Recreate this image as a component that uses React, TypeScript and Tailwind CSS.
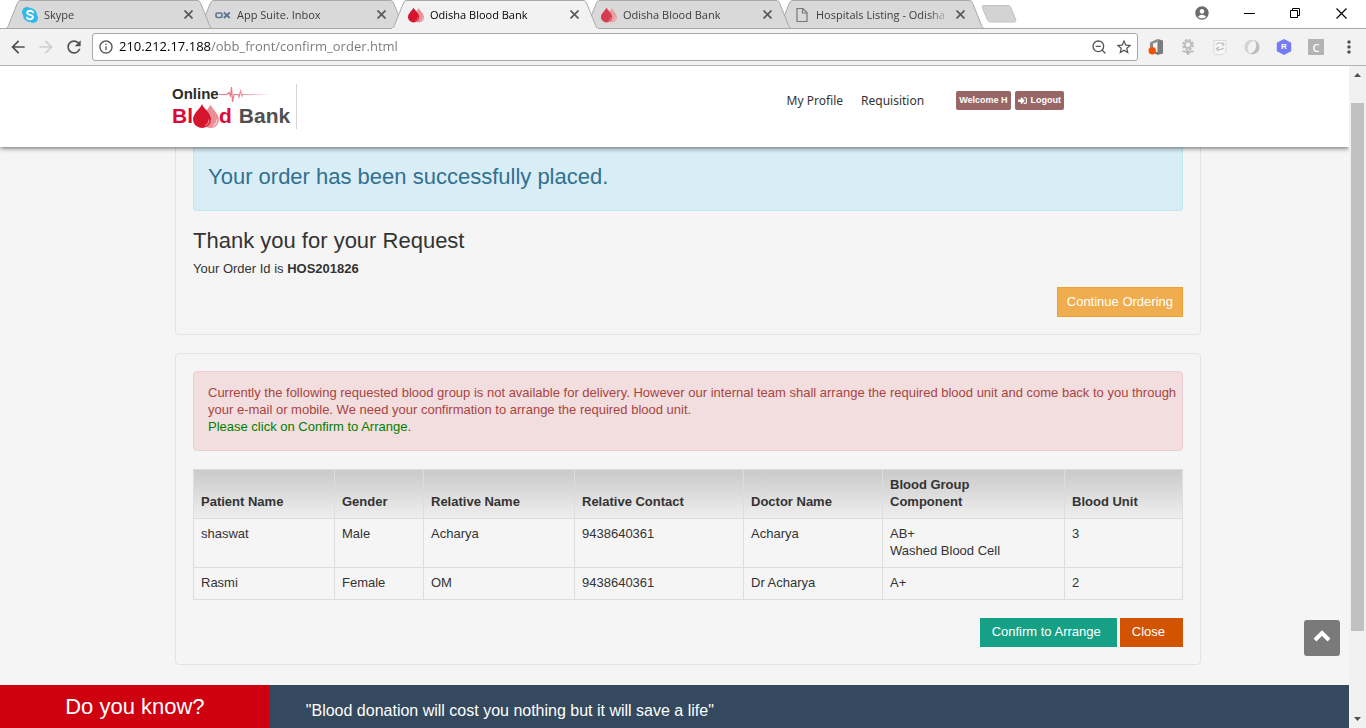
import React from "react";
import { ZoomOut } from "lucide-react";
import { FaSignInAlt } from "react-icons/fa";
import { MdAccountCircle, MdRefresh, MdInfoOutline, MdArrowBack, MdArrowForward, MdStarBorder, MdMoreVert } from "react-icons/md";

function Drops({ className }: { className: string }) {
  return (
    <svg viewBox="0 0 26 24" className={className} aria-hidden="true">
      <path d="M17.5 0.5C18.500 4 26 9.500 26 16A8.500 8 0 0 1 9 16C9 9.500 16.500 4 17.500 0.500Z" fill="#ea8f96" />
      <path d="M24 15.500C24 18.500 22.500 20.500 20 21.700" stroke="#f8d5d8" strokeWidth="1.200" fill="none" />
      <path d="M9 0C10 4 18 9 18 15.500A9 8.500 0 0 1 0 15.500C0 9 8 4 9 0Z" fill="#d5152f" />
      <path d="M16 15.500C16 18.500 14.500 20.500 12 21.700" stroke="#ec7f8c" strokeWidth="1.200" fill="none" />
    </svg>
  );
}

function SkypeIcon() {
  return (
    <svg viewBox="0 0 16 16" className="size-4" aria-hidden="true">
      <circle cx="5" cy="5" r="5" fill="#31b8ee" />
      <circle cx="11" cy="11" r="5" fill="#31b8ee" />
      <circle cx="8" cy="8" r="7" fill="#31b8ee" />
      <path
        d="M11 5.300C10.400 4.200 9.300 3.800 8 3.800C6.400 3.800 5.200 4.500 5.200 5.800C5.200 8.600 10.900 7.300 10.900 10C10.900 11.500 9.500 12.200 8 12.200C6.600 12.200 5.500 11.700 4.900 10.500"
        fill="none"
        stroke="#fff"
        strokeWidth="1.900"
        strokeLinecap="round"
      />
    </svg>
  );
}

function OxIcon() {
  return (
    <svg viewBox="0 0 16 16" className="size-4" aria-hidden="true">
      <rect x="1" y="6" width="6" height="4.500" rx="1.500" fill="none" stroke="#5c7594" strokeWidth="1.700" />
      <path d="M8.800 5.500L14.800 11M14.800 5.500L8.800 11" stroke="#5c7594" strokeWidth="1.800" />
    </svg>
  );
}

function PageIcon() {
  return (
    <svg viewBox="0 0 16 16" className="size-4" aria-hidden="true">
      <path d="M3 1.500H9L13 5.500V14.500H3ZM8.500 1.500V6H13" fill="none" stroke="#777" strokeWidth="1.200" />
    </svg>
  );
}

type TabInfo = { title: string; icon: React.ReactNode; level: string; active?: boolean };

const tabs: TabInfo[] = [
  { title: "Skype", icon: <SkypeIcon />, level: "z-10" },
  { title: "App Suite. Inbox", icon: <OxIcon />, level: "z-0" },
  { title: "Odisha Blood Bank", icon: <Drops className="size-4" />, level: "z-20", active: true },
  { title: "Odisha Blood Bank", icon: <Drops className="size-4 opacity-80" />, level: "z-10" },
  { title: "Hospitals Listing - Odisha", icon: <PageIcon />, level: "z-0" },
];

function Tab({ tab }: { tab: TabInfo }) {
  return (
    <div className={`relative -mr-[13px] flex h-[29px] w-[206px] items-center pr-4 pl-4 ${tab.level}`}>
      <svg viewBox="0 0 206 29" className="absolute inset-0 h-full w-full" preserveAspectRatio="none" aria-hidden="true">
        <path
          d="M0 28.500C2 28 2 26 3 24L11 4C12.500 1 13 0.500 15 0.500H191C193 0.500 193.500 1 195 4L203 24C204 26 204 28 206 28.500"
          fill={tab.active ? "#f2f2f2" : "#d9d9d9"}
          stroke="#a9a9a9"
        />
        <path d="M0 28.500H206" stroke={tab.active ? "#f2f2f2" : "#a9a9a9"} />
      </svg>
      <span className="relative flex w-[22px] shrink-0">{tab.icon}</span>
      <span
        className={`relative flex-1 whitespace-nowrap [mask-image:linear-gradient(to_right,#000_112px,transparent_134px)] ${tab.active ? "text-black" : "text-[#3c3c3c]"}`}
      >
        {tab.title}
      </span>
      <button type="button" aria-label={`Close ${tab.title}`} className="relative flex size-4 items-center justify-center">
        <svg viewBox="0 0 9 9" className="size-[9px]" aria-hidden="true">
          <path d="M0.500 0.500L8.500 8.500M8.500 0.500L0.500 8.500" stroke="#5a5a5a" strokeWidth="1.700" />
        </svg>
      </button>
    </div>
  );
}

function TabStrip() {
  return (
    <div className="flex h-[29px] items-center border-b border-[#a9a9a9] bg-white pl-[6px] font-['Open_Sans',sans-serif] text-[11px] leading-4">
      <div className="flex h-[28px] items-start">
        {tabs.map((tab, i) => (
          <Tab key={i} tab={tab} />
        ))}
      </div>
      <button type="button" aria-label="New tab" className="ml-[10px] flex">
        <svg viewBox="0 0 36 18" className="h-[18px] w-9" aria-hidden="true">
          <path d="M3 0.500H27C28.500 0.500 29 1 30 3L34.500 14C35 16 35 17 33 17H10C8 17 7 16 6.500 15L1.500 3C1 1.500 1 0.500 3 0.500Z" fill="#d3d3d3" stroke="#c0c0c0" />
        </svg>
      </button>
      <div className="ml-auto flex items-center pr-[2px] pb-[2px] text-black">
        <button type="button" aria-label="Profile" className="flex h-[26px] w-12 items-center justify-center text-[#6b6b6b]">
          <MdAccountCircle className="size-4" />
        </button>
        <button type="button" aria-label="Minimize" className="flex h-[26px] w-[46px] items-center justify-center">
          <svg viewBox="0 0 11 11" className="size-[11px]"><path d="M0 5.500H11" stroke="currentColor" /></svg>
        </button>
        <button type="button" aria-label="Restore" className="flex h-[26px] w-[46px] items-center justify-center">
          <svg viewBox="0 0 10 10" className="size-[10px]" fill="none" stroke="currentColor">
            <path d="M0.500 2.500H7.500V9.500H0.500ZM2.500 2.500V0.500H9.500V7.500H7.500" />
          </svg>
        </button>
        <button type="button" aria-label="Close window" className="flex h-[26px] w-[46px] items-center justify-center">
          <svg viewBox="0 0 11 11" className="size-[11px]"><path d="M0.500 0.500L10.500 10.500M10.500 0.500L0.500 10.500" stroke="currentColor" strokeWidth="1.200" /></svg>
        </button>
      </div>
    </div>
  );
}

function Extensions() {
  const cell = "flex w-8 items-center justify-center";
  return (
    <div className="flex items-center">
      <button type="button" aria-label="Office" className={cell}>
        <svg viewBox="0 0 16 16" className="size-4">
          <path d="M2 3.500L9.500 0V3L5 4.500V10L2 11Z" fill="#8a8a8a" />
          <path d="M9.500 0L15 1.500V14.500L9.500 16Z" fill="#7c7c7c" />
          <path d="M3 12.500L10 13V16Z" fill="#757575" />
          <circle cx="4.200" cy="11.800" r="3.700" fill="#f25200" />
        </svg>
      </button>
      <button type="button" aria-label="Flower" className={cell}>
        <svg viewBox="0 0 16 16" className="size-4" fill="none" stroke="#b9b9b9">
          <circle cx="8" cy="5.800" r="4.700" strokeWidth="2.200" strokeDasharray="2.300 1.390" />
          <circle cx="8" cy="5.800" r="3.200" strokeWidth="1.500" />
          <path d="M8 11V14.500M2.500 12.500C5 12 7 13 8 15C9 13 11 12 13.500 12.500" strokeWidth="1.800" />
        </svg>
      </button>
      <button type="button" aria-label="Page tool" className={cell}>
        <svg viewBox="0 0 16 16" className="size-4">
          <path d="M2 1.500H14V12L11 15.500H2Z" fill="#f8f8f8" stroke="#dadada" />
          <path d="M4 5.500C6 3.500 9 3.500 12 5.500M10 3.500L12 5.500L10 7M12 9C9 11 6.500 11 4.500 9.500M7 8L4.500 9.500L6 12" fill="none" stroke="#bfbfbf" strokeWidth="1.200" />
        </svg>
      </button>
      <button type="button" aria-label="Swirl" className={cell}>
        <svg viewBox="0 0 16 16" className="size-4">
          <path d="M10.500 1C5 -0.500 0.500 3 0.500 8C0.500 11.500 3 14.500 6.500 15C4.500 13.500 3.500 11.500 3.800 9C4 5.500 6.500 2.500 10.500 1Z" fill="#d2d2d2" />
          <path d="M5.500 15C11 16.500 15.500 13 15.500 8C15.500 4.500 13 1.500 9.500 1C11.500 2.500 12.500 4.500 12.200 7C12 10.500 9.500 13.500 5.500 15Z" fill="#bdbdbd" />
        </svg>
      </button>
      <button type="button" aria-label="R extension" className={cell}>
        <span className="relative flex size-4 items-center justify-center">
          <svg viewBox="0 0 16 16" className="absolute inset-0">
            <path d="M8 0L15.200 3.800V12.200L8 16L0.800 12.200V3.800Z" fill="#747cf5" />
          </svg>
          <span className="relative font-['Liberation_Sans',sans-serif] text-[8px] leading-none font-bold text-white">R</span>
        </span>
      </button>
      <button type="button" aria-label="C extension" className={cell}>
        <span className="flex size-4 items-center justify-center rounded-[1px] bg-[#b3b3b3] text-[11px] leading-none font-semibold text-white">C</span>
      </button>
      <button type="button" aria-label="Menu" className="flex w-[34px] items-center justify-center text-[#505050]">
        <MdMoreVert className="size-5" />
      </button>
    </div>
  );
}

function Toolbar() {
  return (
    <div className="flex h-[37px] items-center border-b border-[#b4b4b4] bg-[#f2f2f2] pl-2 font-['Open_Sans',sans-serif] text-[13px]">
      <button type="button" aria-label="Back" className="flex w-7 text-[#505050]">
        <MdArrowBack className="size-5" />
      </button>
      <button type="button" aria-label="Forward" className="flex w-7 text-[#cfcfcf]">
        <MdArrowForward className="size-5" />
      </button>
      <button type="button" aria-label="Reload" className="flex w-7 text-[#505050]">
        <MdRefresh className="size-5" />
      </button>
      <div className="flex h-7 min-w-0 flex-1 items-center rounded-[3px] border border-[#a8a8a8] bg-white pr-1 pl-[5px]">
        <MdInfoOutline className="size-4 shrink-0 text-[#555]" />
        <input
          type="text"
          aria-label="Address"
          defaultValue="210.212.17.188/obb_front/confirm_order.html"
          className="ml-[5px] min-w-0 flex-1 bg-[linear-gradient(to_right,#000_92px,#777_92px)] bg-clip-text text-transparent outline-none"
        />
        <button type="button" aria-label="Zoom" className="flex w-6 text-[#555]">
          <ZoomOut className="size-4" strokeWidth={2} />
        </button>
        <button type="button" aria-label="Bookmark" className="flex text-[#505050]">
          <MdStarBorder className="size-[18px]" />
        </button>
      </div>
      <div className="ml-[2px]">
        <Extensions />
      </div>
    </div>
  );
}

function Logo() {
  return (
    <a href="#" aria-label="Online Blood Bank" className="flex h-[45px] w-[125px] flex-col border-r border-[#d4d4d4] font-bold">
      <span className="flex h-5 items-center leading-4">
        <span className="text-[15px] text-[#2b2b2b]">Online</span>
        <svg viewBox="0 0 52 18" className="h-[18px] w-[52px]" fill="none" aria-hidden="true">
          <defs>
            <linearGradient id="pulse" x1="0" x2="1">
              <stop offset="0.300" stopColor="#e8788a" />
              <stop offset="1" stopColor="#e8788a" stopOpacity="0" />
            </linearGradient>
          </defs>
          <path d="M0 9.500H8L10 7.500L11.500 11L12.500 2L13.500 17L15 9.500H19L20 12L21.500 6L23 11L24 9.500H52" stroke="url(#pulse)" strokeWidth="1.200" />
        </svg>
      </span>
      <span className="flex items-center text-[21px] leading-6">
        <span className="text-[#dc0a36]">Bl</span>
        <Drops className="h-6 w-[26px]" />
        <span className="text-[#dc0a36]">d</span>
        <span className="ml-[7px] text-[#505050]">Bank</span>
      </span>
    </a>
  );
}

function SiteHeader() {
  return (
    <header className="relative z-10 bg-white shadow-[0_1px_5px_rgba(0,0,0,0.6)]">
      <div className="pl-[27px]">
        <div className="mx-auto flex h-[81px] max-w-[1032px] items-center justify-between pr-[140px]">
          <Logo />
          <nav className="flex items-center pb-3">
            <a href="#" className="pt-px font-['Noto_Sans',sans-serif] text-[12px] leading-5 text-[#333]">My Profile</a>
            <a href="#" className="ml-[18px] pt-px font-['Noto_Sans',sans-serif] text-[12px] leading-5 text-[#333]">Requisition</a>
            <button type="button" className="ml-8 h-[19px] rounded-[2px] bg-[#996666] px-[3px] text-[9px] leading-none font-bold text-white">Welcome H</button>
            <button type="button" className="ml-1 flex h-[19px] items-center gap-1 rounded-[2px] bg-[#996666] px-[3px] text-[9px] leading-none font-bold text-white">
              <FaSignInAlt className="size-[9px]" />
              Logout
            </button>
          </nav>
        </div>
      </div>
    </header>
  );
}

const columns = [
  { label: "Patient Name", width: "w-[141px]" },
  { label: "Gender", width: "w-[89px]" },
  { label: "Relative Name", width: "w-[151px]" },
  { label: "Relative Contact", width: "w-[169px]" },
  { label: "Doctor Name", width: "w-[139px]" },
  { label: "Blood Group\nComponent", width: "w-[182px]" },
  { label: "Blood Unit", width: "w-[118px]" },
];

const rows = [
  ["shaswat", "Male", "Acharya", "9438640361", "Acharya", "AB+\nWashed Blood Cell", "3"],
  ["Rasmi", "Female", "OM", "9438640361", "Dr Acharya", "A+", "2"],
];

function RequestTable() {
  return (
    <table className="mt-[18px] w-full table-fixed border-collapse border border-[#ddd]">
      <thead>
        <tr className="bg-linear-to-b from-[#cacaca] to-[#efefef]">
          {columns.map((c) => (
            <th key={c.label} scope="col" className={`border border-[#ddd] px-[7px] pt-[6px] pb-2 text-left align-bottom font-bold whitespace-pre-line ${c.width}`}>
              {c.label}
            </th>
          ))}
        </tr>
      </thead>
      <tbody>
        {rows.map((r) => (
          <tr key={r[0]}>
            {r.map((cell, i) => (
              <td key={i} className="border border-[#ddd] px-[7px] pt-[6px] pb-2 align-top whitespace-pre-line">{cell}</td>
            ))}
          </tr>
        ))}
      </tbody>
    </table>
  );
}

function Content() {
  return (
    <main className="pb-5 pl-[27px]">
      <div className="mx-auto max-w-[1026px]">
        <section className="rounded-b border border-t-0 border-[#e3e3e3] bg-[#f5f5f5] px-[17px] pb-[17px]">
          <div className="rounded-b border border-t-0 border-[#bce8f1] bg-[#d9edf7] px-[14px] pt-[17px] pb-5 text-[22px] leading-[26px] text-[#31708f]">
            Your order has been successfully placed.
          </div>
          <h1 className="mt-[17px] text-[22px] leading-[26px]">Thank you for your Request</h1>
          <p className="mt-[6px]">
            Your Order Id is <b>HOS201826</b>
          </p>
          <div className="mt-[10px] flex justify-end">
            <button type="button" className="h-[30px] border border-[#eea236] bg-[#f0ad4e] px-[9px] pb-[2px] text-white">Continue Ordering</button>
          </div>
        </section>

        <section className="mt-[18px] rounded border border-[#e3e3e3] bg-[#f5f5f5] p-[17px]">
          <div className="rounded border border-[#ebccd1] bg-[#f2dede] pt-3 pr-1 pb-[15px] pl-[14px] text-[#a94442]">
            <p>
              Currently the following requested blood group is not available for delivery. However our internal team shall arrange the required blood unit and come back to you through your e-mail or mobile. We need your confirmation to arrange the required blood unit.
            </p>
            <p className="text-[#008000]">Please click on Confirm to Arrange.</p>
          </div>
          <RequestTable />
          <div className="mt-[18px] flex justify-end gap-[3px] text-white">
            <button type="button" className="h-[29px] bg-[#16a085] pr-4 pb-[2px] pl-3">Confirm to Arrange</button>
            <button type="button" className="h-[29px] bg-[#d35400] pr-[18px] pb-[2px] pl-3">Close</button>
          </div>
        </section>
      </div>
    </main>
  );
}

function ScrollBar() {
  return (
    <div className="flex w-[17px] shrink-0 flex-col items-center bg-[#f1f1f1]" aria-hidden="true">
      <svg viewBox="0 0 17 17" className="size-[17px]"><path d="M5 11L8.500 7L12 11Z" fill="#505050" /></svg>
      <div className="flex w-[13px] flex-1 flex-col">
        <div className="grow-[20]" />
        <div className="grow-[528] bg-[#c1c1c1]" />
        <div className="grow-[80]" />
      </div>
      <svg viewBox="0 0 17 17" className="size-[17px]"><path d="M5 6L8.500 10L12 6Z" fill="#505050" /></svg>
    </div>
  );
}

export default function App() {
  return (
    <div className="flex h-screen flex-col overflow-hidden bg-white">
      <TabStrip />
      <Toolbar />
      <div className="flex min-h-0 flex-1">
        <div className="relative flex min-w-0 flex-1 flex-col overflow-hidden bg-[#f5f5f5] font-['Liberation_Sans',Arial,sans-serif] text-[13px] leading-[17px] text-[#333]">
          <SiteHeader />
          <Content />
          <footer className="flex flex-1 bg-[#34495e] text-white">
            <h2 className="w-1/5 bg-[#cf000f] py-[9px] text-center text-[22px] leading-[25px]">Do you know?</h2>
            <p className="flex-1 pt-[17px] pl-9 text-[16px] leading-[18px]">"Blood donation will cost you nothing but it will save a life"</p>
          </footer>
          <button type="button" aria-label="Back to top" className="absolute right-[9px] bottom-[72px] z-20 flex size-9 items-center justify-center rounded-[3px] bg-[#7a7a7a] pb-1">
            <svg viewBox="0 0 18 12" className="h-3 w-[18px]" aria-hidden="true">
              <path d="M2 10L9 3L16 10" fill="none" stroke="#fff" strokeWidth="4" />
            </svg>
          </button>
        </div>
        <ScrollBar />
      </div>
    </div>
  );
}
